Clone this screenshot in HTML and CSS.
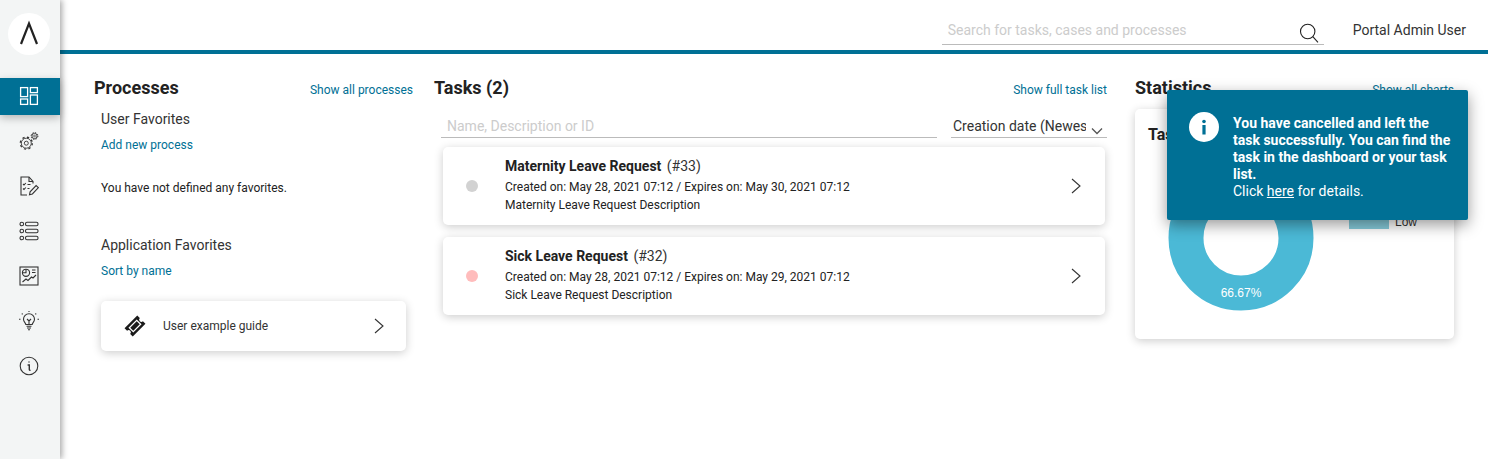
FILE: index.html
```html
<!DOCTYPE html>
<html lang="en">
<head>
  <meta charset="UTF-8" />
  <title>Portal Dashboard</title>
  <link rel="stylesheet" href="styles.css">
</head>
<body>
  <div class="layout">
    <!-- Sidebar -->
    <nav class="sidebar">
      <div class="logo">
        <svg width="42" height="42" viewBox="0 0 42 42"><path d="M13 31 L21 10.5 L29 31" fill="none" stroke="#222" stroke-width="2.2"/></svg>
      </div>
      <a class="nav-item active">
        <svg width="20" height="20" viewBox="0 0 20 20" fill="none" stroke="#fff" stroke-width="1.3"><rect x="1.6" y="1.6" width="7" height="9"/><rect x="1.6" y="13" width="7" height="5.4"/><rect x="11.4" y="1.6" width="7" height="5"/><rect x="11.4" y="9" width="7" height="9.4"/></svg>
      </a>
      <a class="nav-item">
        <svg width="20" height="20" viewBox="0 0 20 20" fill="none" stroke="#333"><circle cx="7.3" cy="12.2" r="5" stroke-width=".9"/><circle cx="7.3" cy="12.2" r="6" stroke-width="1.3" stroke-dasharray="2.2 2.51"/><circle cx="7.3" cy="12.2" r="2" stroke-width=".9"/><circle cx="15.5" cy="5" r="2.6" stroke-width=".9"/><circle cx="15.5" cy="5" r="3.4" stroke-width="1" stroke-dasharray="1.4 1.27"/><circle cx="15.5" cy="5" r=".9" stroke-width=".7"/></svg>
      </a>
      <a class="nav-item">
        <svg width="20" height="20" viewBox="0 0 20 20" fill="none" stroke="#333" stroke-width="1.1"><path d="M14 7.5 V5.5 L10 1 H2 V19 H8"/><path d="M10 1 V5.5 H14"/><path d="M4 8l1 1 1.8-2M4 12.5l1 1 1.8-2M8.5 8.5h3M8.5 12.5h2"/><path d="M10.5 18.8l.6-3 6-6.3 2.3 2.2-6 6.3z"/></svg>
      </a>
      <a class="nav-item">
        <svg width="20" height="20" viewBox="0 0 20 20" fill="none" stroke="#333" stroke-width="1.1"><circle cx="2.8" cy="3" r="1.8"/><rect x="6.5" y="1.2" width="12.5" height="3.6" rx="1.5"/><circle cx="2.8" cy="10" r="1.8"/><rect x="6.5" y="8.2" width="12.5" height="3.6" rx="1.5"/><circle cx="2.8" cy="17" r="1.8"/><rect x="6.5" y="15.2" width="12.5" height="3.6" rx="1.5"/></svg>
      </a>
      <a class="nav-item">
        <svg width="20" height="20" viewBox="0 0 20 20" fill="none" stroke="#333" stroke-width="1.1"><rect x="1" y="1" width="18" height="18"/><circle cx="7" cy="6.8" r="3.6"/><path d="M7 3.2V6.8H3.4"/><path d="M13 4h3.5M13 6.5h3.5"/><path d="M3.5 16l3.5-3 2 1.5 3.5-3.5 1.5 1 3-3"/></svg>
      </a>
      <a class="nav-item">
        <svg width="20" height="20" viewBox="0 0 20 20" fill="none" stroke="#333" stroke-width="1.1"><path d="M6.8 13.5c0-1.6-2.3-2.6-2.3-5.3a5.5 5.5 0 0 1 11 0c0 2.7-2.3 3.7-2.3 5.3z"/><path d="M7.5 15.2h5M8 17h4M9 18.8h2"/><path d="M8 8l2 2 2-2M10 10v3.5"/><path d="M10 0v1M2.8 2.5l.8.8M17.2 2.5l-.8.8M0 8.2h1.5M18.5 8.2H20"/></svg>
      </a>
      <a class="nav-item">
        <svg width="20" height="20" viewBox="0 0 20 20" fill="none" stroke="#333" stroke-width="1.1"><circle cx="10" cy="10" r="8.8"/><circle cx="10" cy="6" r=".7" fill="#333" stroke="none"/><path d="M8.6 9h1.7v4.6c0 .6.4.8 1.2.6" stroke-width="1.4"/></svg>
      </a>
    </nav>

    <div class="main">
      <!-- Top bar -->
      <header class="topbar">
        <div class="search">
          <span class="search-text">Search for tasks, cases and processes</span>
          <svg width="22" height="22" viewBox="0 0 22 22" fill="none" stroke="#222" stroke-width="1.1"><circle cx="9.7" cy="9.5" r="7.2"/><path d="M14.8 14.7l5.2 5.6"/></svg>
        </div>
        <span class="user-name">Portal Admin User</span>
      </header>

      <div class="columns">
        <!-- Processes -->
        <section class="col-processes">
          <div class="col-head">
            <h2>Processes</h2>
            <a class="link">Show all processes</a>
          </div>
          <div class="fav-group">
            <h3>User Favorites</h3>
            <a class="link">Add new process</a>
            <p class="empty">You have not defined any favorites.</p>
          </div>
          <div class="fav-group second">
            <h3>Application Favorites</h3>
            <a class="link">Sort by name</a>
            <div class="card app-card">
              <svg class="ticket" width="22" height="22" viewBox="0 0 22 22"><g transform="rotate(-45 11 11)"><path d="M2 5.2h18v3.6a2.2 2.2 0 0 0 0 4.4v3.6H2v-3.6a2.2 2.2 0 0 0 0-4.4z" fill="#1a1a1a"/><rect x="5.8" y="8.2" width="10.4" height="5.6" fill="none" stroke="#fff" stroke-width="1.3"/></g></svg>
              <span class="app-name">User example guide</span>
              <svg class="chev" width="12" height="16" viewBox="0 0 12 16"><path d="M2 1l8 7-8 7" fill="none" stroke="#333" stroke-width="1.1"/></svg>
            </div>
          </div>
        </section>

        <!-- Tasks -->
        <section class="col-tasks">
          <div class="col-head">
            <h2>Tasks (2)</h2>
            <a class="link">Show full task list</a>
          </div>
          <div class="task-filters">
            <div class="filter-name">Name, Description or ID</div>
            <div class="filter-sort">
              <span class="sort-text">Creation date (Newest first)</span>
              <svg width="12" height="8" viewBox="0 0 12 8"><path d="M1 1.5l5 5 5-5" fill="none" stroke="#555" stroke-width="1.3"/></svg>
            </div>
          </div>
          <div class="card task-card">
            <span class="dot dot-grey"></span>
            <div class="task-body">
              <div class="task-title"><b>Maternity Leave Request</b> <span>(#33)</span></div>
              <div class="task-line">Created on: May 28, 2021 07:12 / Expires on: May 30, 2021 07:12</div>
              <div class="task-line">Maternity Leave Request Description</div>
            </div>
            <svg class="chev" width="12" height="16" viewBox="0 0 12 16"><path d="M2 1l8 7-8 7" fill="none" stroke="#333" stroke-width="1.1"/></svg>
          </div>
          <div class="card task-card">
            <span class="dot dot-red"></span>
            <div class="task-body">
              <div class="task-title"><b>Sick Leave Request</b> <span>(#32)</span></div>
              <div class="task-line">Created on: May 28, 2021 07:12 / Expires on: May 29, 2021 07:12</div>
              <div class="task-line">Sick Leave Request Description</div>
            </div>
            <svg class="chev" width="12" height="16" viewBox="0 0 12 16"><path d="M2 1l8 7-8 7" fill="none" stroke="#333" stroke-width="1.1"/></svg>
          </div>
        </section>

        <!-- Statistics -->
        <section class="col-stats">
          <div class="col-head">
            <h2>Statistics</h2>
            <a class="link">Show all charts</a>
          </div>
          <div class="card chart-card">
            <h4>Tasks by Priority</h4>
            <div class="chart-area">
              <div class="donut">
                <svg width="146" height="146" viewBox="0 0 146 146"><circle cx="73" cy="73" r="55" fill="none" stroke="#4bb9d6" stroke-width="35"/></svg>
                <span class="donut-label">66.67%</span>
              </div>
              <div class="legend">
                <span class="swatch"></span>
                <span class="legend-text">Low</span>
              </div>
            </div>
          </div>
        </section>
      </div>
    </div>
  </div>

  <!-- Notification -->
  <div class="toast">
    <svg class="toast-icon" width="30" height="30" viewBox="0 0 30 30"><circle cx="15" cy="15" r="15" fill="#fff"/><rect x="13.4" y="13" width="3.2" height="9.5" fill="#007095"/><circle cx="15" cy="9.5" r="1.8" fill="#007095"/></svg>
    <div class="toast-text">
      <b>You have cancelled and left the task successfully. You can find the task in the dashboard or your task list.</b><br>
      Click <u>here</u> for details.
    </div>
  </div>
</body>
</html>
```

FILE: styles.css
```css
* {
  margin: 0;
  padding: 0;
  box-sizing: border-box;
  font-family: Roboto, 'Liberation Sans', sans-serif;
}

html, body {
  height: 100%;
  overflow: hidden;
  background: #fff;
  color: #222;
}

.layout {
  display: flex;
  height: 459px;
}

.sidebar {
  width: 60px;
  flex-shrink: 0;
  background: #f3f5f5;
  box-shadow: 2px 0 6px rgba(0, 0, 0, 0.35);
  padding-top: 13px;
  display: flex;
  flex-direction: column;
  z-index: 2;
}

.logo {
  width: 42px;
  height: 42px;
  margin: 0 0 23px 8px;
  border-radius: 50%;
  background: #fff;
}

.logo svg {
  display: block;
}

.nav-item {
  height: 37px;
  margin-bottom: 8px;
  display: flex;
  align-items: flex-start;
  padding: 8px 0 0 19px;
}

.nav-item.active {
  background: #007095;
  box-shadow: 0 3px 8px rgba(0, 0, 0, 0.25);
}

.main {
  flex: 1;
  min-width: 0;
  display: flex;
  flex-direction: column;
}

.topbar {
  height: 54px;
  flex-shrink: 0;
  border-bottom: 4px solid #007095;
  display: flex;
  justify-content: flex-end;
  padding: 17px 22px 0 0;
}

.search {
  width: 382px;
  height: 28px;
  border-bottom: 1px solid #bbb;
  margin-right: 29px;
  padding: 0 4px 0 6px;
  display: flex;
  justify-content: space-between;
}

.search-text {
  font-size: 14px;
  line-height: 27px;
  color: #ccc;
}

.search svg {
  margin-top: 5px;
}

.user-name {
  font-size: 14px;
  line-height: 26px;
  color: #333;
}

.columns {
  display: flex;
  padding: 21px 34px 0 34px;
}

.col-processes {
  width: 319px;
  margin-right: 21px;
}

.col-tasks {
  width: 673px;
  margin-right: 28px;
}

.col-stats {
  width: 319px;
}

.col-head {
  display: flex;
  justify-content: space-between;
  align-items: baseline;
  height: 26px;
}

.col-head h2 {
  font-size: 18px;
  font-weight: 700;
  line-height: 26px;
  color: #222;
}

.link {
  font-size: 12px;
  color: #007095;
}

.fav-group {
  padding-left: 7px;
}

.fav-group h3 {
  font-size: 14px;
  font-weight: 400;
  line-height: 20px;
  margin: 8px 0 8px;
  color: #333;
}

.fav-group .link {
  display: block;
  line-height: 16px;
}

.fav-group.second h3 {
  margin-top: 0;
}

.empty {
  font-size: 12px;
  line-height: 16px;
  margin: 27px 0 39px;
  color: #222;
}

.card {
  background: #fff;
  border-radius: 5px;
  box-shadow: 0 2px 10px rgba(0, 0, 0, 0.2);
}

.app-card {
  width: 305px;
  height: 50px;
  margin-top: 22px;
  display: flex;
  align-items: center;
  padding: 0 21px 0 23px;
}

.app-name {
  flex: 1;
  font-size: 12px;
  margin-left: 17px;
  color: #333;
}

.task-filters {
  display: flex;
  justify-content: space-between;
  margin: 13px 0 9px 7px;
}

.filter-name {
  width: 496px;
  height: 24px;
  border-bottom: 1px solid #bbb;
  font-size: 14px;
  line-height: 25px;
  padding-left: 6px;
  color: #ccc;
}

.filter-sort {
  width: 156px;
  height: 24px;
  border-bottom: 1px solid #bbb;
  padding: 0 4px 0 2px;
  display: flex;
  align-items: flex-start;
  justify-content: space-between;
}

.sort-text {
  width: 133px;
  overflow: hidden;
  white-space: nowrap;
  font-size: 14px;
  line-height: 25px;
  color: #333;
}

.filter-sort svg {
  margin-top: 13px;
}

.task-card {
  margin-left: 9px;
  margin-right: 2px;
  height: 78px;
  margin-bottom: 12px;
  display: flex;
  align-items: center;
  padding-right: 23px;
}

.dot {
  width: 12px;
  height: 12px;
  border-radius: 50%;
  margin-left: 23px;
  margin-right: 27px;
  flex-shrink: 0;
}

.dot-grey {
  background: #d2d2d2;
}

.dot-red {
  background: #ffbcbc;
}

.task-body {
  flex: 1;
  margin-top: -2px;
}

.task-title {
  font-size: 14px;
  line-height: 20px;
  margin-bottom: 2px;
}

.task-title b {
  font-weight: 700;
}

.task-title span {
  margin-left: 2px;
  color: #333;
}

.task-line {
  font-size: 12px;
  line-height: 18px;
  color: #222;
}

.chart-card {
  height: 230px;
  margin-top: 8px;
  padding: 16px 13px 0;
  overflow: hidden;
}

.chart-card h4 {
  font-size: 16px;
  font-weight: 700;
  line-height: 20px;
  white-space: nowrap;
}

.chart-area {
  display: flex;
  margin-top: 20px;
  padding-left: 20px;
}

.donut {
  position: relative;
  width: 146px;
  height: 146px;
  flex-shrink: 0;
}

.donut svg {
  display: block;
}

.donut-label {
  position: absolute;
  left: 0;
  right: 0;
  top: 121px;
  text-align: center;
  font-family: 'Liberation Sans', sans-serif;
  font-size: 12px;
  color: #fff;
}

.legend {
  display: flex;
  margin: 48px 0 0 35px;
}

.swatch {
  width: 40px;
  height: 16px;
  background: #86ccdb;
}

.legend-text {
  font-family: 'Liberation Sans', sans-serif;
  font-size: 12px;
  margin: 0 0 0 6px;
  line-height: 18px;
  color: #333;
}

.toast {
  position: absolute;
  left: 1167px;
  top: 90px;
  width: 301px;
  height: 130px;
  background: #007095;
  border-radius: 2px;
  box-shadow: 0 5px 15px rgba(0, 0, 0, 0.4);
  display: flex;
  padding: 22px 12px 0 22px;
  color: #fff;
  z-index: 3;
}

.toast-icon {
  flex-shrink: 0;
  margin-right: 14px;
}

.toast-text {
  font-size: 14px;
  line-height: 17px;
  margin-top: 3px;
}

.toast-text b {
  font-weight: 700;
}
```
